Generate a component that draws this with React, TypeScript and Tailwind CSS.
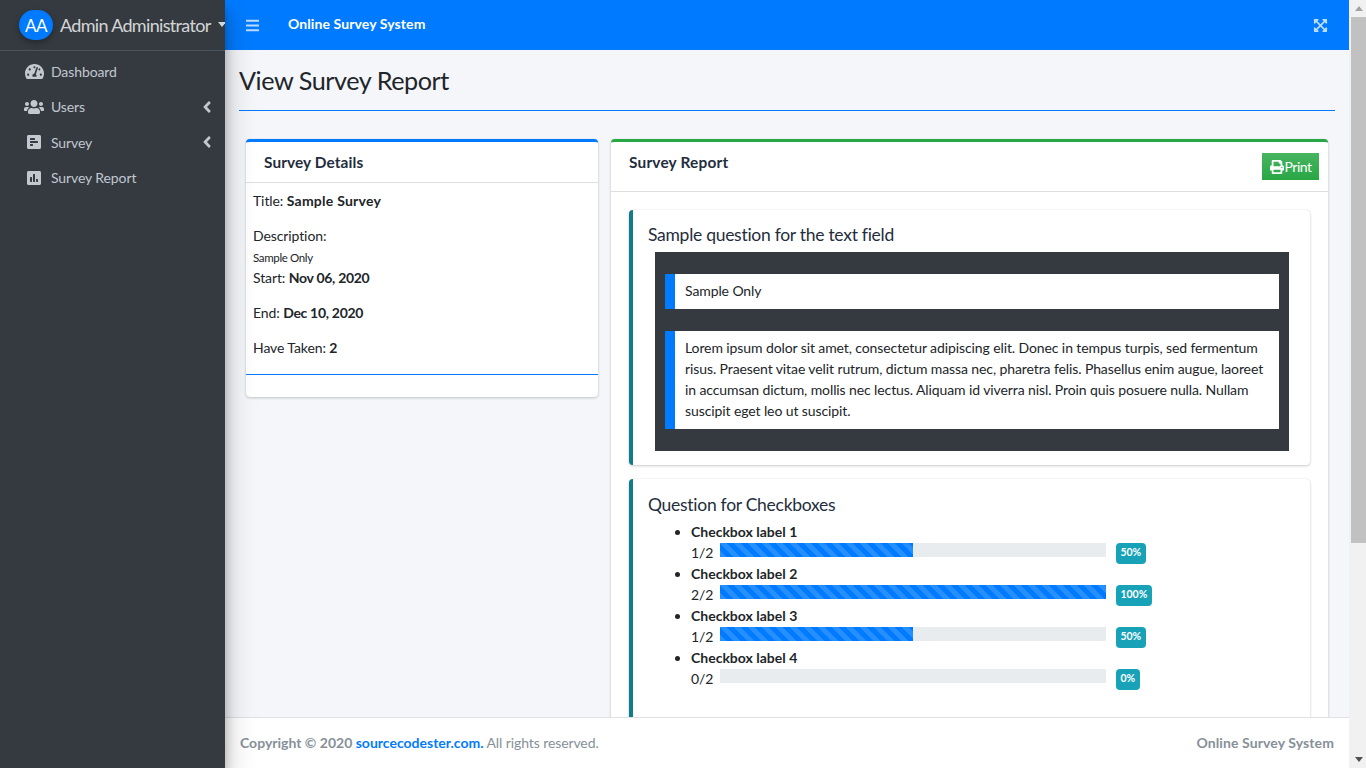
import { FaTachometerAlt, FaUsers, FaPollH, FaPoll, FaAngleLeft, FaBars, FaExpandArrowsAlt, FaPrint } from 'react-icons/fa';

const stripes =
  'bg-[#007bff] bg-[linear-gradient(45deg,rgba(255,255,255,.15)_25%,transparent_25%,transparent_50%,rgba(255,255,255,.15)_50%,rgba(255,255,255,.15)_75%,transparent_75%,transparent)] bg-[length:14px_14px]';

const checkboxes = [
  { label: 'Checkbox label 1', count: '1/2', pct: 50 },
  { label: 'Checkbox label 2', count: '2/2', pct: 100 },
  { label: 'Checkbox label 3', count: '1/2', pct: 50 },
  { label: 'Checkbox label 4', count: '0/2', pct: 0 },
];

const NavItem = ({ icon, label, arrow }: { icon: React.ReactNode; label: string; arrow?: boolean }) => (
  <div className="flex h-[35.3px] items-center pl-[24px] pr-[9px] text-[#c2c7d0]">
    <span className="flex w-[27px] justify-center pr-[7px]">{icon}</span>
    <span className="flex-1">{label}</span>
    {arrow && <FaAngleLeft className="text-[18px]" />}
  </div>
);

const Sidebar = () => (
  <aside className="relative z-10 flex w-[225px] shrink-0 flex-col bg-[#343a40] shadow-[0_14px_28px_rgba(0,0,0,.25),0_10px_10px_rgba(0,0,0,.22)]">
    <div className="flex h-[51px] shrink-0 items-center overflow-hidden border-b border-[#4b545c] pl-[19px]">
      <div className="flex h-[30px] w-[34px] shrink-0 items-center justify-center rounded-full bg-[#007bff] text-[17px] tracking-[-0.4px] text-white shadow-[0_3px_6px_rgba(0,0,0,.3)]">
        AA
      </div>
      <span className="ml-[7px] whitespace-nowrap text-[18px] tracking-[-0.68px] text-[#ffffffcc]">Admin Administrator</span>
      <span className="ml-[7px] mt-[-2px] h-0 w-0 shrink-0 border-x-[4px] border-t-[5px] border-x-transparent border-t-[#ffffffcc]" />
    </div>
    <nav className="pt-[3px]">
      <NavItem icon={<FaTachometerAlt className="text-[19px]" />} label="Dashboard" />
      <NavItem icon={<FaUsers className="text-[20px]" />} label="Users" arrow />
      <NavItem icon={<FaPollH className="text-[16px]" />} label="Survey" arrow />
      <NavItem icon={<FaPoll className="text-[16px]" />} label="Survey Report" />
    </nav>
  </aside>
);

const Topbar = () => (
  <header className="flex h-[50px] shrink-0 items-center bg-[#007bff] pl-[20px] pr-[21px] text-white">
    <FaBars className="text-[15px] text-[#ffffffbf]" />
    <span className="ml-[28px] mt-[-3px] flex-1 font-bold tracking-[0.1px]">Online Survey System</span>
    <FaExpandArrowsAlt className="text-[15px] text-[#ffffffbf]" />
  </header>
);

const DetailsCard = () => (
  <div className="w-[352px] shrink-0 self-start rounded-[4px] border-t-[3px] border-[#007bff] bg-white shadow-[0_0_1px_rgba(0,0,0,.125),0_1px_3px_rgba(0,0,0,.2)]">
    <div className="flex h-[41px] items-center border-b border-[#dfdfdf] pl-[18px]">
      <h3 className="text-[15.4px] font-bold tracking-[0.1px] text-[#1f2d3d]">Survey Details</h3>
    </div>
    <div className="px-[7px] pb-[2px] pt-[7px]">
      <p className="mb-[14px]">
        Title: <b className="tracking-[0.25px]">Sample Survey</b>
      </p>
      <p>Description:</p>
      <p className="h-[21px] text-[11.5px] leading-[23px] tracking-[-0.35px]">Sample Only</p>
      <p className="mb-[14px]">
        Start: <b className="tracking-[-0.3px]">Nov 06, 2020</b>
      </p>
      <p className="mb-[14px]">
        End: <b className="tracking-[-0.3px]">Dec 10, 2020</b>
      </p>
      <p className="mb-[14px]">
        Have Taken: <b>2</b>
      </p>
    </div>
    <hr className="border-[#007bff]" />
    <div className="h-[22px]" />
  </div>
);

const QuestionCard = ({ title, titleClass, children }: { title: string; titleClass: string; children: React.ReactNode }) => (
  <div className="mb-[14px] rounded-[4px] border-l-4 border-[#117a8b] bg-white pb-[14px] pl-[15px] pr-[21px] pt-[14px] shadow-[0_0_1px_rgba(0,0,0,.125),0_1px_3px_rgba(0,0,0,.2)]">
    <h5 className={`h-[28px] text-[17.5px] leading-[21px] tracking-[-0.28px] text-[#1f2d3d] ${titleClass}`}>{title}</h5>
    {children}
  </div>
);

const TextAnswers = () => (
  <div className="ml-[7px] flex flex-col gap-[22px] bg-[#343a40] px-[10px] py-[22px]">
    <div className="border-l-[10px] border-[#007bff] bg-white px-[10px] pb-[8px] pt-[6px]">Sample Only</div>
    <div className="border-l-[10px] border-[#007bff] bg-white px-[10px] pb-[8px] pt-[6px]">
      Lorem ipsum dolor sit amet, consectetur adipiscing elit. Donec in tempus turpis, sed fermentum risus. Praesent
      vitae velit rutrum, dictum massa nec, pharetra felis. Phasellus enim augue, laoreet in accumsan dictum, mollis nec
      lectus. Aliquam id viverra nisl. Proin quis posuere nulla. Nullam suscipit eget leo ut suscipit.
    </div>
  </div>
);

const CheckboxAnswers = () => (
  <ul className="list-disc pb-[40px] pl-[43px]">
    {checkboxes.map((c) => (
      <li key={c.label}>
        <b className="tracking-normal">{c.label}</b>
        <div className="mt-[1px] flex h-[20px] items-start">
          <span className="w-[29px] shrink-0 leading-[19px]">{c.count}</span>
          <div className="h-[14px] w-[386px] shrink-0 bg-[#e9ecef]">
            {c.pct > 0 && <div className={`h-full ${stripes}`} style={{ width: `${c.pct}%` }} />}
          </div>
          <span className="ml-[10px] flex h-[21px] items-start rounded-[4px] bg-[#17a2b8] px-[4.5px] pt-[3px] text-[10.5px] font-bold leading-[12px] tracking-[-0.05px] text-white">
            {c.pct}%
          </span>
        </div>
      </li>
    ))}
  </ul>
);

const ReportCard = () => (
  <div className="min-w-0 flex-1 rounded-[4px] border-t-[3px] border-[#28a745] bg-white shadow-[0_0_1px_rgba(0,0,0,.125),0_1px_3px_rgba(0,0,0,.2)]">
    <div className="flex h-[50px] items-start justify-between border-b border-[#dfdfdf] pl-[18px] pr-[9px]">
      <h3 className="mt-[10px] text-[15.4px] font-bold tracking-[0.2px] text-[#1f2d3d]">Survey Report</h3>
      <button className="mt-[11px] flex h-[27px] w-[57px] items-center justify-center bg-[#28a745] bg-[linear-gradient(180deg,#48b461,#28a745)] text-white">
        <FaPrint className="text-[14px]" />
        <span className="ml-[1px] tracking-[-0.5px]">Print</span>
      </button>
    </div>
    <div className="p-[18px]">
      <QuestionCard title="Sample question for the text field" titleClass="pt-0">
        <TextAnswers />
      </QuestionCard>
      <QuestionCard title="Question for Checkboxes" titleClass="pt-[1px]">
        <CheckboxAnswers />
      </QuestionCard>
    </div>
  </div>
);

const Scrollbar = () => (
  <div className="flex w-[17px] shrink-0 flex-col bg-[#f1f1f1]">
    <div className="flex h-[17px] items-center justify-center pl-[2px]">
      <svg width="8" height="5" viewBox="0 0 8 5">
        <path d="M4 0 8 5H0z" fill="#a3a3a3" />
      </svg>
    </div>
    <div className="ml-[2px] h-[526px] bg-[#c1c1c1]" />
    <div className="flex-1" />
    <div className="flex h-[17px] items-center justify-center pl-[2px]">
      <svg width="8" height="5" viewBox="0 0 8 5">
        <path d="M0 0H8L4 5z" fill="#505050" />
      </svg>
    </div>
  </div>
);

export default function App() {
  return (
    <div className="flex h-screen w-full overflow-hidden bg-[#f4f6f9] font-['Lato','Liberation_Sans',sans-serif] text-[14px] leading-[21px] tracking-[-0.1px] text-[#212529]">
      <Sidebar />
      <div className="flex min-w-0 flex-1 flex-col">
        <Topbar />
        <main className="min-h-0 flex-1 overflow-hidden px-[14px]">
          <h1 className="mt-[15px] text-[25.2px] leading-[30px] tracking-[-0.45px] text-[#212529]">View Survey Report</h1>
          <hr className="mt-[15px] border-[#007bff]" />
          <div className="mt-[28px] flex gap-[13px] px-[7px]">
            <DetailsCard />
            <ReportCard />
          </div>
        </main>
        <footer className="flex h-[51px] shrink-0 items-center justify-between border-t border-[#dee2e6] bg-white pb-[2px] pl-[15px] pr-[15px] text-[#869099]">
          <span>
            <b className="tracking-normal">Copyright © 2020 </b>
            <b className="tracking-normal text-[#007bff]">sourcecodester.com.</b> All rights reserved.
          </span>
          <b className="tracking-[0.1px]">Online Survey System</b>
        </footer>
      </div>
      <Scrollbar />
    </div>
  );
}
